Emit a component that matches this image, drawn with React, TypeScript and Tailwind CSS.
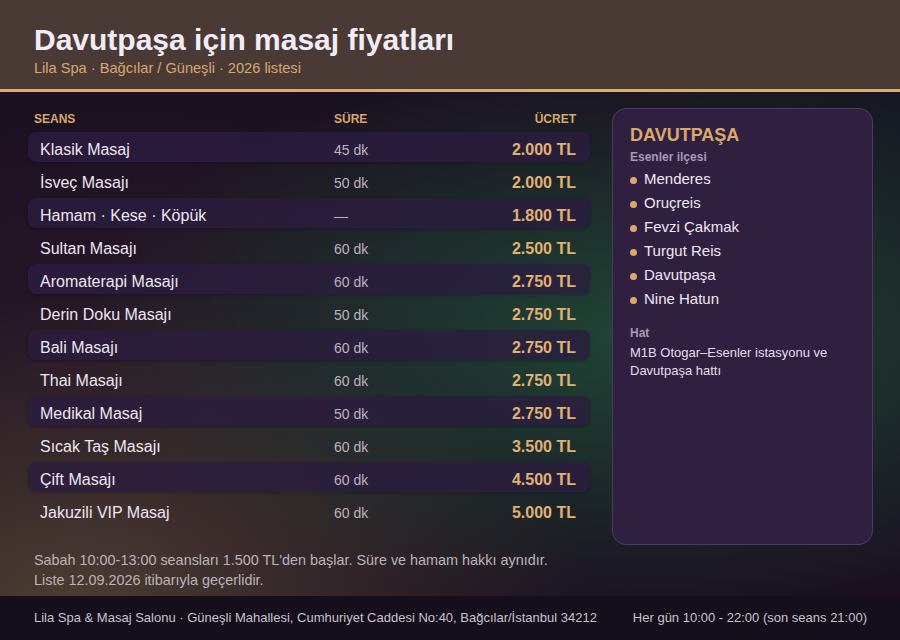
const rows = [
  { name: 'Klasik Masaj', time: '45 dk', price: '2.000 TL' },
  { name: 'İsveç Masajı', time: '50 dk', price: '2.000 TL' },
  { name: 'Hamam · Kese · Köpük', time: '—', price: '1.800 TL' },
  { name: 'Sultan Masajı', time: '60 dk', price: '2.500 TL' },
  { name: 'Aromaterapi Masajı', time: '60 dk', price: '2.750 TL' },
  { name: 'Derin Doku Masajı', time: '50 dk', price: '2.750 TL' },
  { name: 'Bali Masajı', time: '60 dk', price: '2.750 TL' },
  { name: 'Thai Masajı', time: '60 dk', price: '2.750 TL' },
  { name: 'Medikal Masaj', time: '50 dk', price: '2.750 TL' },
  { name: 'Sıcak Taş Masajı', time: '60 dk', price: '3.500 TL' },
  { name: 'Çift Masajı', time: '60 dk', price: '4.500 TL' },
  { name: 'Jakuzili VIP Masaj', time: '60 dk', price: '5.000 TL' },
];

const areas = ['Menderes', 'Oruçreis', 'Fevzi Çakmak', 'Turgut Reis', 'Davutpaşa', 'Nine Hatun'];

export default function App() {
  return (
    <div className="w-[900px] h-[640px] flex flex-col overflow-hidden font-['Liberation_Sans',Arial,sans-serif] bg-[#1a1020]">
      <header className="h-[89px] shrink-0 bg-[#4a3a36] px-[34px] pt-[22px]">
        <h1 className="text-[30px] leading-[36px] font-bold text-[#f3ecf5]">Davutpaşa için masaj fiyatları</h1>
        <p className="text-[14.6px] leading-[20px] text-[#d7a86d]">Lila Spa · Bağcılar / Güneşli · 2026 listesi</p>
      </header>
      <div className="h-[3px] shrink-0 bg-[#d9ac72]" />

      <main className="flex-1 flex pl-[28px] pt-[16px] bg-[#1a1020] bg-[image:radial-gradient(ellipse_560px_280px_at_72%_48%,rgba(32,76,56,0.9),transparent),radial-gradient(ellipse_520px_300px_at_8%_100%,rgba(78,62,50,0.95),transparent),radial-gradient(ellipse_380px_260px_at_15%_45%,rgba(48,28,44,0.6),transparent),radial-gradient(ellipse_260px_140px_at_100%_5%,rgba(20,22,32,0.9),transparent)]">
        <section className="w-[562px] flex flex-col">
          <div className="flex items-baseline pt-[4px] pl-[6px] pr-[14px] text-[12px] leading-[14px] font-bold text-[#d6a86c]">
            <span className="w-[300px]">SEANS</span>
            <span className="flex-1">SÜRE</span>
            <span className="text-right">ÜCRET</span>
          </div>
          <div className="mt-[6px] flex flex-col gap-[3px]">
            {rows.map((r, i) => (
              <div
                key={r.name}
                className={
                  'h-[30px] flex items-baseline pt-[8px] pl-[12px] pr-[14px] rounded-[8px] ' +
                  (i % 2 === 0 ? 'bg-[#2b1d3e]/80 shadow-[0_1px_3px_rgba(0,0,0,0.25)]' : '')
                }
              >
                <span className="w-[294px] text-[16px] leading-[20px] text-[#eee6f1]">{r.name}</span>
                <span className="flex-1 text-[14px] leading-[20px] text-[#bcb2c0]">{r.time}</span>
                <span className="text-[16px] leading-[20px] font-bold text-[#e2b173]">{r.price}</span>
              </div>
            ))}
          </div>
          <div className="mt-[25px] pl-[6px] text-[14.4px] leading-[20px] text-[#bdb3ba]">
            <p>Sabah 10:00-13:00 seansları 1.500 TL'den başlar. Süre ve hamam hakkı aynıdır.</p>
            <p>Liste 12.09.2026 itibarıyla geçerlidir.</p>
          </div>
        </section>

        <aside className="ml-[22px] w-[261px] h-[437px] rounded-[14px] border border-[#4b3b63] bg-[#2f2040] pl-[17px] pr-[16px] pt-[15px]">
          <h2 className="text-[18px] leading-[22px] font-bold text-[#d9a96a]">DAVUTPAŞA</h2>
          <p className="mt-[3px] text-[12px] leading-[16px] font-bold text-[#a999b6]">Esenler ilçesi</p>
          <ul className="mt-[2px]">
            {areas.map((a) => (
              <li key={a} className="flex items-center h-[24px] text-[15px] text-[#efe7f2]">
                <span className="mr-[7px] w-[7px] h-[7px] rounded-full bg-[#d9a96a] mt-[2px]" />
                {a}
              </li>
            ))}
          </ul>
          <p className="mt-[14px] text-[12px] leading-[16px] font-bold text-[#a999b6]">Hat</p>
          <p className="mt-[3px] text-[13px] leading-[18px] text-[#e6deea]">M1B Otogar–Esenler istasyonu ve Davutpaşa hattı</p>
        </aside>
      </main>

      <footer className="h-[44px] shrink-0 bg-[#150f1c] flex items-center justify-between pl-[34px] pr-[33px] text-[13px] text-[#c9c1cd]">
        <span>Lila Spa &amp; Masaj Salonu · Güneşli Mahallesi, Cumhuriyet Caddesi No:40, Bağcılar/İstanbul 34212</span>
        <span>Her gün 10:00 - 22:00 (son seans 21:00)</span>
      </footer>
    </div>
  );
}
